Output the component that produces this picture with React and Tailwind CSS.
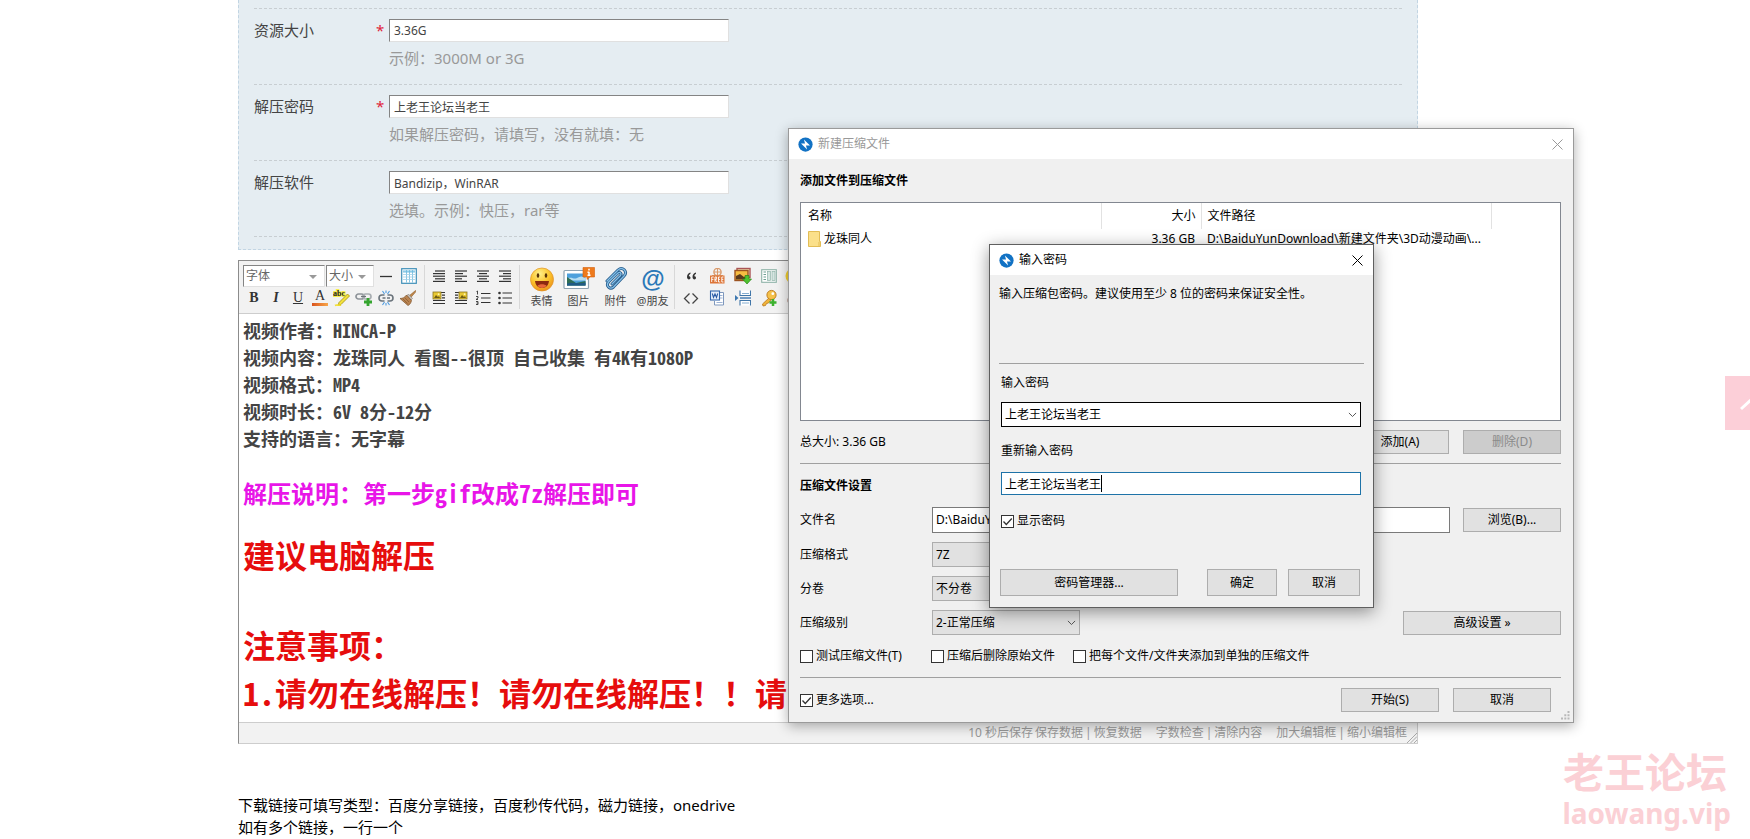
import React from "react";

const UI = "font-['Noto_Sans','Noto_Sans_CJK_SC',sans-serif]";
const HEI = "font-['Noto_Sans_Mono_CJK_SC','Noto_Sans_CJK_SC',sans-serif]";

const fields = [
  { id: "size", label: "资源大小", value: "3.36G", hint: "示例：3000M or 3G", required: true },
  { id: "pwd", label: "解压密码", value: "上老王论坛当老王", hint: "如果解压密码，请填写，没有就填：无", required: true },
  { id: "soft", label: "解压软件", value: "Bandizip，WinRAR", hint: "选填。示例：快压，rar等", required: false },
];

function FormPanel() {
  return (
    <section className="border-x border-b border-dashed border-[#c2d5e3] bg-[#e5edf2] px-[15px] pt-2 pb-3">
      {fields.map((f) => (
        <div key={f.id} className="flex h-[76px] border-t border-dashed border-[#c8ced2] pt-[10px] text-[15px] text-[#444]">
          <label htmlFor={f.id} className="w-[122px] leading-[22px]">{f.label}</label>
          <span className="w-[13px] leading-[22px] text-[#e0243a]">{f.required ? "*" : ""}</span>
          <div>
            <input
              id={f.id}
              defaultValue={f.value}
              className="block h-[23px] w-[340px] border border-t-[#848484] border-l-[#848484] border-r-[#e0e0e0] border-b-[#e0e0e0] bg-white px-1 text-xs text-[#444] outline-none"
            />
            <p className="mt-1 leading-6 text-[#999]">{f.hint}</p>
          </div>
        </div>
      ))}
      <div className="border-t border-dashed border-[#c8ced2]" />
    </section>
  );
}

function Icon({ children, size = 16, label }) {
  return (
    <svg viewBox={`0 0 ${size} ${size}`} width={size} height={size} role="img" aria-label={label}>
      {children}
    </svg>
  );
}

function Tool({ label, children, wide }) {
  return (
    <button type="button" aria-label={label} className={`flex h-[22px] items-center justify-center ${wide ? "w-[26px]" : "w-[22px]"}`}>
      {children}
    </button>
  );
}

function Lines({ rows }) {
  return (
    <g stroke="#333" strokeWidth="1.2">
      {rows.map(([a, b], i) => (
        <path key={i} d={`M${a} ${3 + i * 2.6}H${b}`} />
      ))}
    </g>
  );
}

const alignIcons = [
  ["自动排版", [[4, 14], [2, 14], [2, 14], [4, 14], [2, 14]]],
  ["左对齐", [[2, 14], [2, 10], [2, 14], [2, 9], [2, 14]]],
  ["居中", [[2, 14], [4, 12], [2, 14], [4, 12], [2, 14]]],
  ["右对齐", [[2, 14], [6, 14], [2, 14], [6, 14], [2, 14]]],
];

function PictureFloat({ right }) {
  const x = right ? 6 : 2;
  return (
    <>
      <path d="M2 2.5H14M2 10.5H14M2 13.5H14" stroke="#333" strokeWidth="1.2" />
      <path d={right ? "M2 5.2H5M2 7.8H5" : "M11 5.2H14M11 7.8H14"} stroke="#333" strokeWidth="1.2" />
      <rect x={x} y="2" width="8" height="7" fill="#e8c832" stroke="#8a7420" strokeWidth=".8" />
      <path d={`M${x + 1} 8l2-3 2 2 1-1 1 2z`} fill="#6f5c12" />
      <circle cx={x + 5.6} cy="4.2" r=".9" fill="#fff6b0" />
    </>
  );
}

function Separator() {
  return <div className="mx-[3px] w-px self-stretch bg-[#d8d8d8]" />;
}

function DropDown({ label, text, className }) {
  return (
    <div className={`relative ${className}`}>
      <select
        aria-label={label}
        className="block h-[22px] w-full appearance-none border border-t-[#848484] border-l-[#848484] border-r-[#e0e0e0] border-b-[#e0e0e0] bg-white pl-[2px] text-xs text-[#666] outline-none"
      >
        <option>{text}</option>
      </select>
      <svg viewBox="0 0 8 4" className="pointer-events-none absolute top-[10px] right-2 h-1 w-2" aria-hidden="true">
        <path d="M0 0h8L4 4z" fill="#999" />
      </svg>
    </div>
  );
}

function BigTool({ label, children }) {
  return (
    <button type="button" className="flex w-[37px] flex-col items-center text-[11px] leading-4 text-[#444]">
      <svg viewBox="0 0 32 28" className="h-7 w-8" aria-hidden="true">{children}</svg>
      <span className="whitespace-nowrap">{label}</span>
    </button>
  );
}

function Toolbar() {
  return (
    <div className="flex overflow-hidden border-b border-[#cdcdcd] bg-[#f2f2f2] p-1">
      <div className="flex flex-col pr-px">
        <div className="flex gap-px">
          <DropDown label="字体" text="字体" className="w-[82px]" />
          <DropDown label="大小" text="大小" className="w-12" />
          <Tool label="分隔线"><Icon><path d="M2 8.5H14" stroke="#333" strokeWidth="1.3" /></Icon></Tool>
          <Tool label="表格">
            <Icon>
              <rect x=".7" y=".7" width="14.6" height="14.6" fill="#fff" stroke="#3f8fb8" strokeWidth="1.2" />
              <path d="M2 3.5H14" stroke="#8bcbe8" strokeWidth="2.2" />
              <path d="M5.5 2v12.500M8.500 2v12.500M11.500 2v12.500" stroke="#6db7dc" strokeWidth=".8" />
              <path d="M2 6.500H14M2 9H14M2 11.500H14" stroke="#9fd0e8" strokeWidth=".8" />
            </Icon>
          </Tool>
        </div>
        <div className="flex text-sm text-[#333]">
          <Tool label="粗体"><b className="font-['Liberation_Serif',serif]">B</b></Tool>
          <Tool label="斜体"><b className="font-['Liberation_Serif',serif] italic">I</b></Tool>
          <Tool label="下划线"><u className="font-['Liberation_Serif',serif]">U</u></Tool>
          <Tool label="文字颜色">
            <span className="flex flex-col items-center font-['Liberation_Serif',serif] leading-3">
              A
              <span className="mt-px h-[3px] w-4 bg-gradient-to-r from-[#d9541e] to-[#f7a64a]" />
            </span>
          </Tool>
          <Tool label="背景色">
            <Icon size={18}>
              <text x="0" y="7" fontSize="8" fontWeight="bold" fontFamily="Liberation Serif" fill="#222" style={{ paintOrder: "stroke" }} stroke="#f7ee4a" strokeWidth="2">abc</text>
              <path d="M6 13.500L14.500 5l2 2-8.500 8.500-2.800.800z" fill="#f4e23a" stroke="#a8971b" strokeWidth=".9" />
              <path d="M2 16.500c2-1.500 4 .5 6-.5" stroke="#f2de2b" strokeWidth="1.600" fill="none" />
            </Icon>
          </Tool>
          <Tool label="添加链接">
            <Icon size={18}>
              <rect x="1" y="5" width="8" height="5" rx="2.500" fill="none" stroke="#8e9499" strokeWidth="1.700" />
              <rect x="8" y="5" width="8" height="5" rx="2.500" fill="none" stroke="#a8adb1" strokeWidth="1.700" />
              <path d="M6 7.500H11" stroke="#6e7479" strokeWidth="1.300" />
              <path d="M13 9v8M9 13h8" stroke="#35a52f" strokeWidth="2.800" />
            </Icon>
          </Tool>
          <Tool label="移除链接">
            <Icon>
              <path d="M6.500 11H4a3 3 0 0 1 0-6h2.500M9.500 5H12a3 3 0 0 1 0 6H9.500M4.500 8h3M9 8h3" fill="none" stroke="#6b747c" strokeWidth="1.600" />
              <path d="M4.500 1l2 3M11.500 1l-2 3M8 .500V3M4.500 15l2-3M11.500 15l-2-3M8 13v2.500" stroke="#4d9be0" strokeWidth="1.100" />
            </Icon>
          </Tool>
          <Tool label="清除格式">
            <Icon>
              <path d="M15.500.500L9.500 5.500l1.500 1.800L16 1.500z" fill="#c48848" stroke="#875a2a" strokeWidth=".6" />
              <path d="M8.500 4L12.500 8.500l-1.500 1.500L7 5.500z" fill="#c9c2bb" stroke="#857c72" strokeWidth=".6" />
              <path d="M6.500 5L11.500 10.500c-.500 2.500-2 4.500-3.500 5L0 8.500C2.500 8.500 5 7.500 6.500 5z" fill="#b98350" stroke="#7d5228" strokeWidth=".7" />
              <path d="M3 9l4.500 4.500M5 8l4 4" stroke="#7d5228" strokeWidth=".6" />
            </Icon>
          </Tool>
        </div>
      </div>
      <Separator />
      <div className="grid grid-cols-4 place-content-start">
        {alignIcons.map(([label, rows]) => (
          <Tool key={label} label={label}><Icon><Lines rows={rows} /></Icon></Tool>
        ))}
        <Tool label="左浮动"><Icon><PictureFloat /></Icon></Tool>
        <Tool label="右浮动"><Icon><PictureFloat right /></Icon></Tool>
        <Tool label="排序的列表">
          <Icon>
            <path d="M6 3.500H15.500M6 8H15.500M6 12.500H15.500" stroke="#333" strokeWidth="1.200" />
            <path d="M1.500 1.500l1-.5v3.500M1 6.500h2v1.500l-2 1.500h2M1 11.500h2v3H1M1.500 13H3" fill="none" stroke="#333" strokeWidth=".9" />
          </Icon>
        </Tool>
        <Tool label="未排序列表">
          <Icon>
            <path d="M5.500 3H15M5.500 8H15M5.500 13H15" stroke="#333" strokeWidth="1.200" />
            <g fill="#333"><circle cx="2.500" cy="3" r="1.300" /><circle cx="2.500" cy="8" r="1.300" /><circle cx="2.500" cy="13" r="1.300" /></g>
          </Icon>
        </Tool>
      </div>
      <Separator />
      <div className="flex">
        <BigTool label="表情">
          <defs>
            <radialGradient id="face" cx=".4" cy=".25" r=".85">
              <stop offset="0" stopColor="#ffef8a" /><stop offset=".5" stopColor="#fcc52c" /><stop offset="1" stopColor="#e8871a" />
            </radialGradient>
          </defs>
          <circle cx="16" cy="14.500" r="11.500" fill="url(#face)" stroke="#e0942a" strokeWidth=".7" />
          <ellipse cx="12" cy="10.500" rx="1.300" ry="2.300" fill="#5b3406" />
          <ellipse cx="20" cy="10.500" rx="1.300" ry="2.300" fill="#5b3406" />
          <path d="M9 16h14c-.5 4.500-3.300 7-7 7s-6.500-2.500-7-7z" fill="#8c2a10" />
          <path d="M11.500 20.700c2-2 7-2 9 0-1.200 1.500-2.700 2.200-4.500 2.200s-3.300-.7-4.500-2.200z" fill="#e8683a" />
        </BigTool>
        <BigTool label="图片">
          <rect x="1" y="5.500" width="24.500" height="18" rx="1" fill="#fff" stroke="#8da2b2" strokeWidth="1.200" />
          <rect x="4" y="8.500" width="18.500" height="12" fill="#4da0dc" />
          <path d="M4 14c4-3 7 1 10-1s5.500-2 8.500 0v2.500H4z" fill="#b6ddf2" />
          <path d="M4 12l9 6 9.500-2v4.500H4z" fill="#2d6d56" />
          <path d="M4 18.500c6-2 12 1 18.500-1v3H4z" fill="#1f5a86" />
          <path d="M20 2.500h11.500v9.500h-4.500l-3 2.500V12h-4z" fill="#ee7a1c" stroke="#d3600b" strokeWidth=".6" />
          <path d="M26 3.800v1.700M26 6.700v4M24.500 10.300h3M24.500 7.200H26" stroke="#fff" strokeWidth="1.500" />
        </BigTool>
        <BigTool label="附件">
          <path d="M7 16L18 5c4.500-4 10 1.500 6 6L13.500 22c-3.500 3-8-1-5-5L18 8c2-1.500 4 .7 2.500 2.500L12 19" fill="none" stroke="#245b8c" strokeWidth="3" strokeLinecap="round" />
          <path d="M7 16L18 5c4.500-4 10 1.500 6 6L13.500 22c-3.500 3-8-1-5-5L18 8c2-1.500 4 .7 2.500 2.500L12 19" fill="none" stroke="#86bfe6" strokeWidth="1.300" strokeLinecap="round" />
        </BigTool>
        <BigTool label="@朋友">
          <text x="16" y="22" textAnchor="middle" fontSize="24" fontWeight="bold" fontFamily="Liberation Sans" fill="#2a78b8">@</text>
        </BigTool>
      </div>
      <Separator />
      <div className="grid grid-cols-5 place-content-start">
        <Tool wide label="引用">
          <Icon><path d="M7.500 4.500c-2 .5-3.500 2-3.500 4.500 0 3.200 3.500 3 3.500.8 0-1.200-.8-1.700-1.700-1.600.1-1.200.8-2 1.700-2.500zM13 4.500c-2 .5-3.500 2-3.500 4.500 0 3.200 3.500 3 3.500.8 0-1.200-.8-1.700-1.700-1.600.1-1.200.8-2 1.700-2.500z" fill="#333" /></Icon>
        </Tool>
        <Tool wide label="免费信息">
          <Icon>
            <circle cx="8.500" cy="4" r="3.600" fill="none" stroke="#d99a6c" strokeWidth="1.400" />
            <path d="M5 4h7M8.500.500v7M3 7.500h11" stroke="#d99a6c" />
            <rect x="1" y="7.500" width="14.500" height="8" fill="#dd7436" />
            <path d="M2.700 14V9h2M2.700 11.400h1.700M6 14V9h1.600v2.300H6l2 2.700M11.200 9H9.500v5h1.700M9.500 11.400h1.500M14.500 9h-1.700v5h1.700M12.800 11.400h1.500" fill="none" stroke="#fff" strokeWidth=".9" />
          </Icon>
        </Tool>
        <Tool wide label="下载远程图片">
          <Icon size={18}>
            <rect x="3" y="1.500" width="13" height="9" fill="#f4e4b8" stroke="#a55" strokeWidth="1.400" />
            <rect x="1" y="3.500" width="13" height="10" fill="#f6bd42" stroke="#9c5321" strokeWidth="1.400" />
            <path d="M2 12.500V9l4-2 4 3 3-1.500v4z" fill="#5a3a1c" />
            <path d="M11 8.500h4v3.500h2.500L13 17l-4.500-5H11z" fill="#4fc12f" stroke="#2c8b18" strokeWidth=".7" />
          </Icon>
        </Tool>
        <Tool wide label="目录">
          <Icon>
            <rect x=".7" y="1.700" width="14.600" height="12.600" fill="#fff" stroke="#8fb3a8" strokeWidth="1.100" />
            <path d="M2.500 4h2.500M2.500 6.500h2.500M2.500 9h2.500M2.500 11.500h2.500" stroke="#6f9f92" strokeWidth="1.100" />
            <rect x="6.500" y="3.500" width="3" height="9" fill="#d5e5e0" stroke="#8fb3a8" strokeWidth=".7" />
            <rect x="11" y="3.500" width="3" height="9" fill="#d5e5e0" stroke="#8fb3a8" strokeWidth=".7" />
          </Icon>
        </Tool>
        <Tool label="BT">
          <Icon><circle cx="8" cy="8" r="7.500" fill="#f3cf2e" /><path d="M5 5h3M5 8h3M5 11h3M5 5v6" stroke="#333" strokeWidth="1.300" /></Icon>
        </Tool>
        <Tool wide label="代码"><Icon><path d="M6.500 3.500L1.500 8.500l5 5M9.500 3.500l5 5-5 5" fill="none" stroke="#444" strokeWidth="1.300" /></Icon></Tool>
        <Tool wide label="从 Word 粘贴">
          <Icon>
            <path d="M6 2.500h8.500v12.500H5.500V11" fill="#fff" stroke="#7f98bd" />
            <path d="M11 5.500h2.500M11 8h2.500M7.500 12.500h6" stroke="#9db2d3" />
            <rect x="1.500" y="1" width="9" height="9" fill="#e6effb" stroke="#3467ae" strokeWidth="1.100" />
            <path d="M3.300 3.500l1.200 4L6 4l1.500 3.500 1.200-4" fill="none" stroke="#2a5ba6" strokeWidth="1.100" />
          </Icon>
        </Tool>
        <Tool wide label="分页">
          <Icon>
            <path d="M5 .500V5.500H15.500V.500M5 15.500V10.500H15.500V15.500" fill="#fff" stroke="#4176a8" strokeWidth="1.100" />
            <path d="M7 3.500h7M7 13h7" stroke="#87aed0" />
            <path d="M5 8H16" stroke="#3e78b0" strokeWidth="1.400" />
            <path d="M0 5l3.500 3L0 11z" fill="#3e78b0" />
          </Icon>
        </Tool>
        <Tool wide label="密码">
          <Icon size={18}>
            <path d="M10 8L2.500 15l.5 2 2.500-.5 1-2 2-.5 3.500-4z" fill="#f0b43a" stroke="#b9761a" strokeWidth=".8" />
            <circle cx="11.500" cy="6" r="4.600" fill="#f5c14a" stroke="#b9761a" strokeWidth=".9" />
            <circle cx="12.800" cy="4.700" r="1.400" fill="#fff" />
            <path d="M13 10v7M9.500 13.500h7" stroke="#3db22f" strokeWidth="2.500" />
          </Icon>
        </Tool>
        <Tool label="附加"><Icon><path d="M8 1c5 2 6 8 3 14H4C1 11 3 4 8 1z" fill="#8a4a38" /></Icon></Tool>
      </div>
    </div>
  );
}

function FooterLinks({ children }) {
  return <span className="flex gap-[2px]">{children}</span>;
}

function Editor() {
  return (
    <section className="mt-[10px] border border-t-[#8c8c8c] border-l-[#8c8c8c] border-r-[#cdcdcd] border-b-[#cdcdcd] bg-white">
      <Toolbar />
      <article className={`${HEI} overflow-hidden px-1 pt-[3px] pb-[6px] font-bold whitespace-nowrap`}>
        <div className="text-[18px] leading-[27px] text-[#444]">
          <p>视频作者：HINCA-P</p>
          <p>视频内容：龙珠同人 看图--很顶 自己收集 有4K有1080P</p>
          <p>视频格式：MP4</p>
          <p>视频时长：6V 8分-12分</p>
          <p>支持的语言：无字幕</p>
        </div>
        <p className="mt-[27px] text-[24px] leading-[27px] text-[#e815e8]">解压说明：第一步gif改成7z解压即可</p>
        <div className="mt-6 text-[32px] leading-[48px] text-[#e60d0d]">
          <p>建议电脑解压</p>
          <p className="mt-[42px]">注意事项：</p>
          <p>1.请勿在线解压！请勿在线解压！！请</p>
        </div>
      </article>
      <footer className="flex h-[21px] items-center justify-end border-t border-[#cdcdcd] bg-[#f2f2f2] text-xs leading-4 text-[#999]">
        <FooterLinks><span>10 秒后保存</span> <a href="#save">保存数据</a>|<a href="#restore">恢复数据</a></FooterLinks>
        <span className="ml-[14px]"><FooterLinks><a href="#count">字数检查</a>|<a href="#clear">清除内容</a></FooterLinks></span>
        <span className="ml-[14px]"><FooterLinks><a href="#grow">加大编辑框</a>|<a href="#shrink">缩小编辑框</a></FooterLinks></span>
        <svg viewBox="0 0 10 10" className="h-[10px] w-[10px] self-end" aria-hidden="true">
          <path d="M0 10L10 0M3.500 10L10 3.500M7 10l3-3" stroke="#aaa" />
        </svg>
      </footer>
    </section>
  );
}

function BoltIcon() {
  return (
    <svg viewBox="0 0 16 16" className="h-[15px] w-[15px]" aria-hidden="true">
      <circle cx="8" cy="8" r="7.600" fill="#1272c4" />
      <path d="M6.300 2.600L7.500 7H3.200l6.500 6.400L8.500 9h4.300z" fill="#fff" />
    </svg>
  );
}

function TitleBar({ title, dim }) {
  return (
    <header className={`flex h-[30px] items-center bg-white pr-[10px] pl-[9px] ${dim ? "text-[#999]" : "text-black"}`}>
      <BoltIcon />
      <h2 className="ml-[5px]">{title}</h2>
      <button type="button" aria-label="关闭" className="ml-auto">
        <svg viewBox="0 0 11 11" className="h-[11px] w-[11px]"><path d="M.500.500l10 10M10.500.500l-10 10" stroke="currentColor" fill="none" /></svg>
      </button>
    </header>
  );
}

function Btn({ children, className = "", disabled }) {
  return (
    <button
      type="button"
      disabled={disabled}
      className={`flex h-6 items-center justify-center border border-[#adadad] text-center ${disabled ? "bg-[#cccccc] text-[#8a8a8a]" : "bg-[#e1e1e1]"} ${className}`}
    >
      {children}
    </button>
  );
}

function Check({ label, checked, className = "" }) {
  return (
    <label className={`flex items-center gap-[3px] whitespace-nowrap ${className}`}>
      <span className="relative h-[13px] w-[13px]">
        <input type="checkbox" defaultChecked={checked} className="peer block h-[13px] w-[13px] appearance-none border border-[#333] bg-white" />
        <svg viewBox="0 0 13 13" className="pointer-events-none absolute inset-0 hidden h-[13px] w-[13px] peer-checked:block" aria-hidden="true">
          <path d="M2.500 6.500l2.800 3 5.500-6" fill="none" stroke="#333" strokeWidth="1.300" />
        </svg>
      </span>
      {label}
    </label>
  );
}

function Chevron() {
  return (
    <svg viewBox="0 0 10 6" className="pointer-events-none absolute top-[10px] right-1 h-[6px] w-[9px]" aria-hidden="true">
      <path d="M1 .700l4 4 4-4" fill="none" stroke="#555" strokeWidth="1.100" />
    </svg>
  );
}

function Rule({ className = "" }) {
  return <div className={`border-t border-[#a0a0a0] ${className}`} />;
}

const options = [
  { id: "format", label: "压缩格式", value: "7Z" },
  { id: "volume", label: "分卷", value: "不分卷" },
  { id: "level", label: "压缩级别", value: "2-正常压缩" },
];

function ArchiveDialog() {
  return (
    <section className="absolute top-[128px] left-[788px] w-[786px] border border-[#9a9a9a] bg-[#f0f0f0] text-xs text-black shadow-[0_3px_12px_rgba(0,0,0,0.32)]">
      <TitleBar title="新建压缩文件" dim />
      <div className="pr-3 pb-[10px] pl-[11px]">
        <h3 className="mt-[14px] leading-4 font-bold">添加文件到压缩文件</h3>
        <div className="mt-[13px] h-[219px] border border-[#828790] bg-white">
          <table className="w-full table-fixed">
            <thead>
              <tr className="h-[26px] text-left">
                <th className="w-[300px] border-r border-[#e2e2e2] pl-[7px] font-normal">名称</th>
                <th className="w-[100px] border-r border-[#e2e2e2] pr-[5px] text-right font-normal">大小</th>
                <th className="w-[290px] border-r border-[#e2e2e2] pl-[6px] font-normal">文件路径</th>
                <th />
              </tr>
            </thead>
            <tbody>
              <tr className="h-5">
                <td className="pl-[7px]">
                  <span className="flex items-center gap-[3px]">
                    <svg viewBox="0 0 13 16" className="h-4 w-[13px]" aria-hidden="true">
                      <path d="M.500.500h11v10h1v5H.500z" fill="#fbe08a" stroke="#e3bd55" />
                      <path d="M11 11v4" stroke="#e3bd55" />
                    </svg>
                    龙珠同人
                  </span>
                </td>
                <td className="pr-[6px] text-right">3.36 GB</td>
                <td className="pl-[6px] whitespace-nowrap">D:\BaiduYunDownload\新建文件夹\3D动漫动画\...</td>
                <td />
              </tr>
            </tbody>
          </table>
        </div>
        <div className="mt-[9px] flex items-center gap-[14px]">
          <span className="mr-auto">总大小: 3.36 GB</span>
          <Btn className="w-[98px]">添加(A)</Btn>
          <Btn className="w-[98px]" disabled>删除(D)</Btn>
        </div>
        <Rule className="mt-[9px]" />
        <h3 className="mt-[14px] leading-4 font-bold">压缩文件设置</h3>
        <div className="mt-[13px] flex h-[26px] items-center">
          <label htmlFor="fname" className="w-[132px]">文件名</label>
          <input id="fname" defaultValue="D:\BaiduYunDownload\新建文件夹\3D动漫动画" className="h-[26px] flex-1 border border-[#7a7a7a] bg-white px-[3px] pb-[2px] outline-none" />
          <Btn className="ml-[13px] w-[98px]">浏览(B)...</Btn>
        </div>
        {options.map((o) => (
          <div key={o.id} className="mt-[9px] flex h-[25px] items-center">
            <label htmlFor={o.id} className="w-[132px]">{o.label}</label>
            <div className="relative mr-auto w-[148px]">
              <select id={o.id} className="block h-[25px] w-full appearance-none border border-[#adadad] bg-[#e1e1e1] pl-[3px] outline-none">
                <option>{o.value}</option>
              </select>
              <Chevron />
            </div>
            {o.id === "level" && <Btn className="w-[158px]">高级设置 »</Btn>}
          </div>
        ))}
        <div className="mt-[13px] flex h-4">
          <Check label="测试压缩文件(T)" className="w-[131px]" />
          <Check label="压缩后删除原始文件" className="w-[142px]" />
          <Check label="把每个文件/文件夹添加到单独的压缩文件" />
        </div>
        <Rule className="mt-[13px]" />
        <div className="mt-[10px] flex items-center gap-[14px] pr-[10px]">
          <Check label="更多选项..." checked className="mr-auto" />
          <Btn className="w-[98px]">开始(S)</Btn>
          <Btn className="w-[98px]">取消</Btn>
        </div>
      </div>
      <svg viewBox="0 0 9 9" className="absolute right-[3px] bottom-[2px] h-[9px] w-[9px]" aria-hidden="true">
        <path d="M6.500 0h2v2h-2zM6.500 3.300h2v2h-2zM3.300 3.300h2v2h-2zM6.500 6.600h2v2h-2zM3.300 6.600h2v2h-2zM0 6.600h2v2H0z" fill="#b8b8b8" />
      </svg>
    </section>
  );
}

function PasswordDialog() {
  return (
    <section className="absolute top-[244px] left-[989px] w-[385px] border border-[#5f5f5f] bg-[#f0f0f0] text-xs text-black shadow-[0_4px_16px_rgba(0,0,0,0.42)]">
      <TitleBar title="输入密码" />
      <div className="px-[9px] pb-[11px]">
        <p className="pt-[11px] leading-4">输入压缩包密码。建议使用至少 8 位的密码来保证安全性。</p>
        <Rule className="mt-[61px]" />
        <div className="pr-[3px] pl-[2px]">
          <label htmlFor="pw1" className="mt-[11px] block leading-4">输入密码</label>
          <div className="relative mt-[11px]">
            <select id="pw1" className="block h-[25px] w-full appearance-none border border-black bg-white pl-[3px] outline-none">
              <option>上老王论坛当老王</option>
            </select>
            <Chevron />
          </div>
          <label htmlFor="pw2" className="mt-4 block leading-4">重新输入密码</label>
          <div className="relative mt-[13px]">
            <input id="pw2" defaultValue="上老王论坛当老王" className="block h-[23px] w-full border border-[#1e73a8] bg-white px-[3px] outline-none" />
            <span className="absolute top-[3px] left-[100px] h-[17px] w-px bg-black" />
          </div>
          <Check label="显示密码" checked className="mt-[18px] h-4" />
        </div>
        <div className="mt-10 flex pr-1">
          <Btn className="mr-auto ml-px h-[27px] w-[178px]">密码管理器...</Btn>
          <Btn className="h-[27px] w-[70px]">确定</Btn>
          <Btn className="ml-[11px] h-[27px] w-[72px]">取消</Btn>
        </div>
      </div>
    </section>
  );
}

export default function App() {
  return (
    <div className={`${UI} relative min-h-screen overflow-hidden bg-white`}>
      <main className="mr-[332px] ml-[238px]">
        <FormPanel />
        <Editor />
        <div className="mt-[50px] text-[15px] leading-[22px] text-black">
          <p>下载链接可填写类型：百度分享链接，百度秒传代码，磁力链接，onedrive</p>
          <p>如有多个链接，一行一个</p>
        </div>
      </main>
      <a href="#top" aria-label="返回顶部" className="absolute top-[376px] right-0 h-[54px] w-[25px] overflow-hidden bg-[#fccfd8]">
        <svg viewBox="0 0 25 54" className="h-[54px] w-[25px]"><path d="M16 33l13-12" stroke="#fff" strokeWidth="3" /></svg>
      </a>
      <div className="absolute right-[19px] bottom-2 text-right font-bold text-[#fbd0d5]">
        <p className="pr-1 text-[41px] leading-[46px]">老王论坛</p>
        <p className="text-[28px] leading-9">laowang.vip</p>
      </div>
      <ArchiveDialog />
      <PasswordDialog />
    </div>
  );
}
